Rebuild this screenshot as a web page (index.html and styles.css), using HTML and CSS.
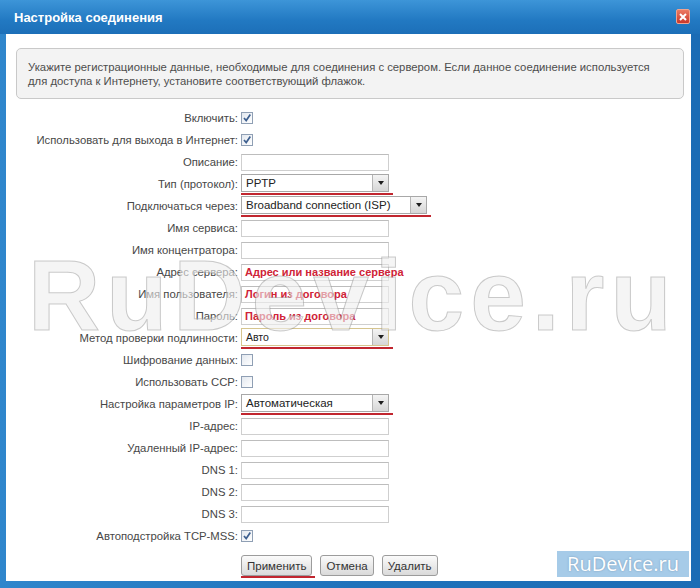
FILE: index.html
```html
<!DOCTYPE html>
<html lang="ru">
<head>
    <meta charset="UTF-8">
    <title>Настройка соединения</title>
    <link rel="stylesheet" href="styles.css">
</head>
<body>
    <div class="window">
        <div class="titlebar">
            <span class="title">Настройка соединения</span>
            <span class="close">
                <svg width="8" height="8" viewBox="0 0 8 8"><path d="M1 1L7 7M7 1L1 7" stroke="#fff" stroke-width="2"/></svg>
            </span>
        </div>
        <div class="content">
            <div class="note">
                Укажите регистрационные данные, необходимые для соединения с сервером. Если данное соединение используется<br>
                для доступа к Интернету, установите соответствующий флажок.
            </div>
            <div class="form">
                <label>Включить:</label>
                <div class="field"><span class="chk"><svg width="10" height="10" viewBox="0 0 10 10"><path d="M2 5L4.2 7.6L8.3 1.6" fill="none" stroke="#3d5f8f" stroke-width="1.7"/></svg></span></div>

                <label>Использовать для выхода в Интернет:</label>
                <div class="field"><span class="chk"><svg width="10" height="10" viewBox="0 0 10 10"><path d="M2 5L4.2 7.6L8.3 1.6" fill="none" stroke="#3d5f8f" stroke-width="1.7"/></svg></span></div>

                <label>Описание:</label>
                <div class="field"><div class="inp"></div></div>

                <label>Тип (протокол):</label>
                <div class="field"><span class="mark"><div class="sel">PPTP<span class="arr"><i></i></span></div></span></div>

                <label>Подключаться через:</label>
                <div class="field"><span class="mark"><div class="sel wide">Broadband connection (ISP)<span class="arr"><i></i></span></div></span></div>

                <label>Имя сервиса:</label>
                <div class="field"><div class="inp"></div></div>

                <label>Имя концентратора:</label>
                <div class="field"><div class="inp"></div></div>

                <label>Адрес сервера:</label>
                <div class="field"><div class="inp"><span class="hint">Адрес или название сервера</span></div></div>

                <label>Имя пользователя:</label>
                <div class="field"><div class="inp"><span class="hint">Логин из договора</span></div></div>

                <label>Пароль:</label>
                <div class="field"><div class="inp"><span class="hint">Пароль из договора</span></div></div>

                <label>Метод проверки подлинности:</label>
                <div class="field"><span class="mark"><div class="sel focus small">Авто<span class="arr"><i></i></span></div></span></div>

                <label>Шифрование данных:</label>
                <div class="field"><span class="chk"></span></div>

                <label>Использовать CCP:</label>
                <div class="field"><span class="chk"></span></div>

                <label>Настройка параметров IP:</label>
                <div class="field"><span class="mark"><div class="sel">Автоматическая<span class="arr"><i></i></span></div></span></div>

                <label>IP-адрес:</label>
                <div class="field"><div class="inp"></div></div>

                <label>Удаленный IP-адрес:</label>
                <div class="field"><div class="inp"></div></div>

                <label>DNS 1:</label>
                <div class="field"><div class="inp"></div></div>

                <label>DNS 2:</label>
                <div class="field"><div class="inp"></div></div>

                <label>DNS 3:</label>
                <div class="field"><div class="inp"></div></div>

                <label>Автоподстройка TCP-MSS:</label>
                <div class="field"><span class="chk"><svg width="10" height="10" viewBox="0 0 10 10"><path d="M2 5L4.2 7.6L8.3 1.6" fill="none" stroke="#3d5f8f" stroke-width="1.7"/></svg></span></div>
            </div>
            <div class="buttons">
                <span class="mark btn-mark"><button>Применить</button></span>
                <button>Отмена</button>
                <button>Удалить</button>
            </div>
            <div class="watermark">RuDevice.ru</div>
        </div>
        <div class="brand">RuDevice.ru</div>
    </div>
</body>
</html>
```

FILE: styles.css
```css
* {
    box-sizing: border-box;
    margin: 0;
    padding: 0;
}
body {
    width: 700px;
    height: 588px;
    overflow: hidden;
    font-family: "Liberation Sans", Arial, sans-serif;
}
.window {
    width: 700px;
    height: 588px;
    position: relative;
    background: linear-gradient(90deg, #2f86cc, #1f72bb 50%, #1b6cb5);
}
.titlebar {
    height: 34px;
    display: flex;
    align-items: center;
    justify-content: space-between;
    padding: 0 10px 0 14px;
    background: linear-gradient(#3d95d8, #2279c2 60%, #1c6fb8);
}
.title {
    color: #fff;
    font-weight: bold;
    font-size: 13px;
    margin-top: 1px;
}
.close {
    width: 14px;
    height: 15px;
    margin-top: -1px;
    display: flex;
    align-items: center;
    justify-content: center;
    border: 1px solid #f1a38f;
    border-radius: 2px;
    background: linear-gradient(#ec7a62, #c9372b);
}
.content {
    position: relative;
    margin: 0 9px 0 6px;
    height: 547px;
    background: #fff;
    overflow: hidden;
}
.note {
    margin: 14px 7px 0 10px;
    height: 51px;
    padding: 11px 11px;
    border: 1px solid #c9c9c9;
    border-radius: 5px;
    background: #f3f3f3;
    color: #4d4d4d;
    font-size: 11.3px;
    line-height: 14px;
    white-space: nowrap;
}
.form {
    margin-top: 8px;
    display: grid;
    grid-template-columns: 232px 1fr;
    grid-auto-rows: 22px;
    column-gap: 3px;
    align-items: center;
}
.form label {
    text-align: right;
    font-size: 11.3px;
    color: #474747;
    white-space: nowrap;
}
.field {
    display: flex;
    align-items: center;
}
.chk {
    width: 12px;
    height: 12px;
    border: 1px solid #8f9fb4;
    background: linear-gradient(135deg, #e3e8ef, #fff);
    display: flex;
    align-items: center;
    justify-content: center;
}
.inp {
    width: 148px;
    height: 17px;
    border: 1px solid #cfcfcf;
    border-top-color: #bdbdbd;
    background: #fff;
    display: flex;
    align-items: center;
    padding-left: 3px;
    white-space: nowrap;
    overflow: visible;
}
.hint {
    color: #cf2337;
    font-weight: bold;
    font-size: 11px;
}
.mark {
    display: inline-block;
    padding: 0 4px 1px 0;
    border-bottom: 2px solid #c1262f;
}
.sel {
    width: 148px;
    height: 18px;
    border: 1px solid #a8a8a8;
    background: #fff;
    display: flex;
    align-items: center;
    padding-left: 4px;
    font-size: 11.5px;
    color: #222;
}
.sel.wide {
    width: 186px;
}
.sel.small {
    font-size: 10.5px;
}
.sel.focus {
    border-color: #d6c58f;
}
.arr {
    margin-left: auto;
    width: 16px;
    height: 16px;
    border-left: 1px solid #b5b5b5;
    background: linear-gradient(#f4f4f4, #d6d6d6);
    display: flex;
    align-items: center;
    justify-content: center;
}
.arr i {
    border-left: 3px solid transparent;
    border-right: 3px solid transparent;
    border-top: 4px solid #1e1e1e;
}
.buttons {
    margin-top: 8px;
    padding-left: 235px;
    display: flex;
    align-items: flex-start;
    gap: 8px;
}
.btn-mark {
    padding: 0 3px 0 0;
    margin-right: -3px;
}
button {
    height: 21px;
    padding: 0 5px;
    border: 1px solid #9c9c9c;
    border-radius: 3px;
    background: linear-gradient(#fbfbfb, #dadada);
    font-family: "Liberation Sans", Arial, sans-serif;
    font-size: 11.5px;
    color: #333;
}
.watermark {
    position: absolute;
    left: 22px;
    top: 211px;
    font-size: 100px;
    font-weight: bold;
    line-height: 100px;
    letter-spacing: 6px;
    color: rgba(238, 238, 238, 0.6);
    -webkit-text-stroke: 1px rgba(130, 130, 130, 0.4);
    white-space: nowrap;
    pointer-events: none;
}
.brand {
    position: absolute;
    left: 557px;
    top: 551px;
    width: 132px;
    height: 26px;
    background: #a6cbe8;
    color: #fff;
    font-family: "Open Sans", sans-serif;
    font-size: 20px;
    line-height: 26px;
    text-align: center;
    text-shadow: 0 0 2px rgba(90, 120, 150, 0.6);
}
```
